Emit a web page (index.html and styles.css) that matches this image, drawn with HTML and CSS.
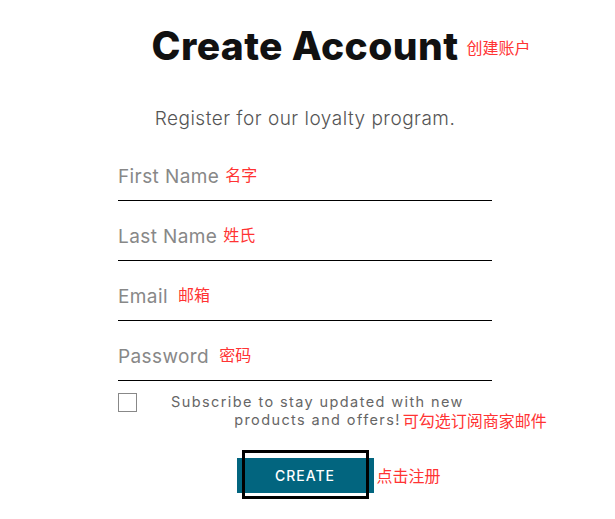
FILE: index.html
```html
<!DOCTYPE html>
<html lang="en">
<head>
  <meta charset="UTF-8" />
  <meta name="viewport" content="width=device-width, initial-scale=1.0"/>
  <title>Create Account</title>
  <link rel="stylesheet" href="styles.css">
</head>
<body>
  <main class="page">
    <h1 class="title"><span class="title-text">Create Account<span class="note note-title">创建账户</span></span></h1>
    <p class="subtitle">Register for our loyalty program.</p>

    <form class="form">
      <div class="field"><span class="label">First Name</span><span class="note-inline">名字</span></div>
      <div class="field"><span class="label">Last Name</span><span class="note-inline">姓氏</span></div>
      <div class="field"><span class="label">Email</span><span class="note-inline gap">邮箱</span></div>
      <div class="field"><span class="label">Password</span><span class="note-inline gap">密码</span></div>

      <label class="subscribe">
        <span class="checkbox"></span>
        <span class="subscribe-text"><span>Subscribe to stay updated with new</span><br><span>products and offers!</span><span class="note note-sub">可勾选订阅商家邮件</span></span>
      </label>

      <div class="actions">
        <div class="btn-frame">
          <button type="button" class="create-btn">CREATE</button>
          <span class="note note-btn">点击注册</span>
        </div>
      </div>
    </form>
  </main>
</body>
</html>
```

FILE: styles.css
```css
* {
  margin: 0;
  padding: 0;
  box-sizing: border-box;
}

body {
  background: #fff;
  color: #111;
  font-family: Inter, "Noto Sans CJK SC", sans-serif;
  padding-right: 5px;
}

.page {
  width: 374px;
  margin: 0 auto;
}

.note,
.note-inline {
  color: #ff3333;
  font-family: "Noto Sans CJK SC", sans-serif;
  font-size: 16px;
  font-weight: 400;
  letter-spacing: 0;
}

.note {
  position: absolute;
  white-space: nowrap;
  line-height: 18px;
}

.title {
  text-align: center;
  font-size: 39px;
  font-weight: 800;
  letter-spacing: 0.4px;
  line-height: 48px;
  padding-top: 22px;
}

.title-text {
  position: relative;
}

.note-title {
  margin-left: 8px;
  top: 16px;
}

.subtitle {
  text-align: center;
  font-size: 19px;
  font-weight: 300;
  color: #555;
  letter-spacing: 0.5px;
  line-height: 24px;
  margin-top: 37px;
}

.form {
  margin-top: 10px;
}

.field {
  height: 60px;
  border-bottom: 1px solid #000;
  display: flex;
  align-items: flex-end;
  padding-bottom: 11px;
  gap: 6px;
}

.label {
  font-size: 19px;
  color: #888;
  line-height: 24px;
  letter-spacing: 0.4px;
}

.note-inline {
  line-height: 24px;
  margin-bottom: 3px;
}

.note-inline.gap {
  margin-left: 4px;
}

.subscribe {
  display: flex;
  align-items: flex-start;
  margin-top: 12px;
}

.checkbox {
  flex: none;
  width: 19px;
  height: 19px;
  border: 1px solid #888;
}

.subscribe-text {
  flex: 1;
  margin-left: 6px;
  text-align: center;
  font-size: 14.5px;
  color: #666;
  letter-spacing: 1.4px;
  line-height: 18px;
}

.note-sub {
  margin-left: 2px;
  line-height: 16px;
  margin-top: 1px;
}

.actions {
  display: flex;
  justify-content: center;
  margin-top: 21px;
}

.btn-frame {
  position: relative;
  width: 127px;
  padding: 8px 0 6px;
}

.btn-frame::after {
  content: "";
  position: absolute;
  inset: 0;
  border: 3px solid #000;
  pointer-events: none;
}

.create-btn {
  display: block;
  width: 137px;
  height: 35px;
  margin: 0 -5px;
  background: #02657f;
  color: #fff;
  border: none;
  font-family: Inter, sans-serif;
  font-size: 14px;
  font-weight: 500;
  letter-spacing: 1px;
}

.note-btn {
  left: 100%;
  top: 16px;
  margin-left: 8px;
}
```
